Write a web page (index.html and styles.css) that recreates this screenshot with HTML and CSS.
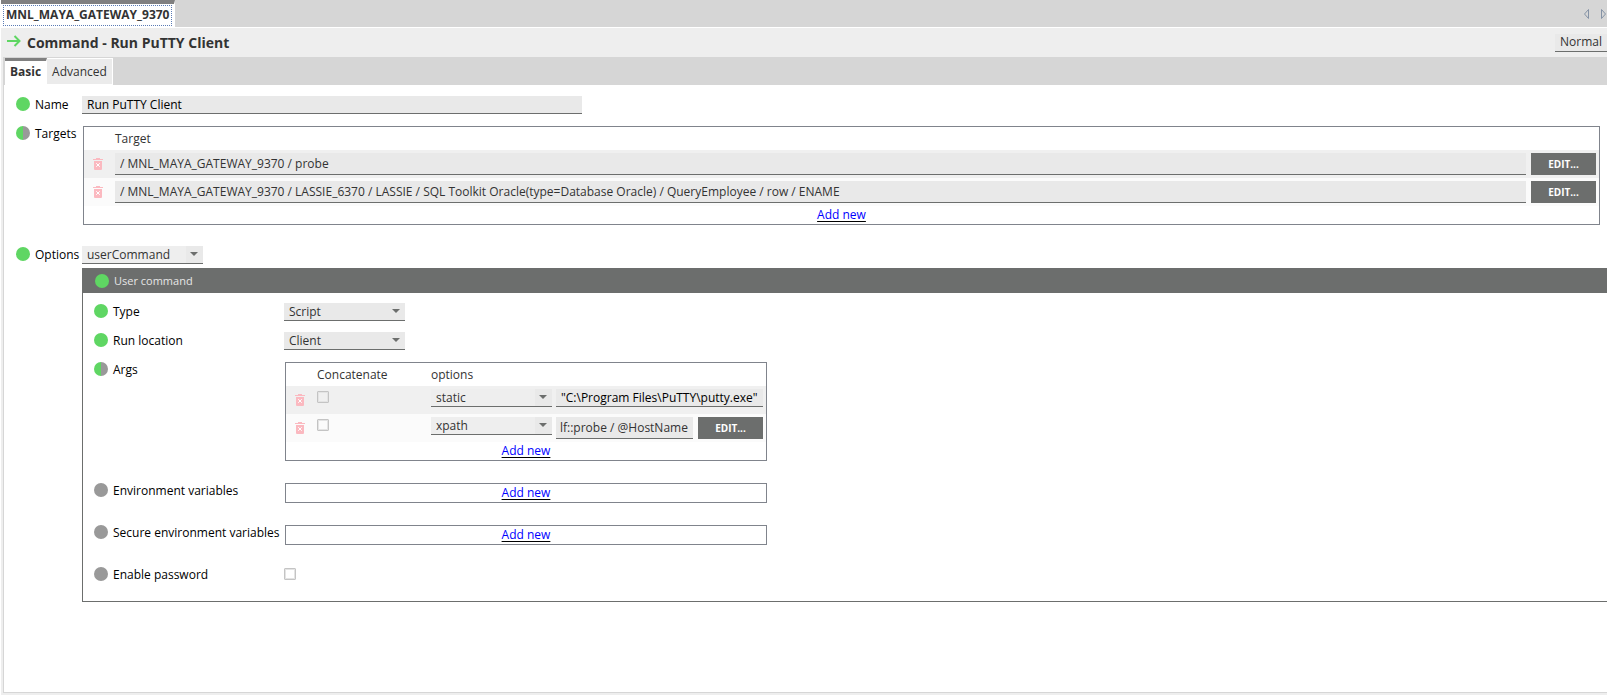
FILE: index.html
```html
<!DOCTYPE html>
<html lang="en">
  <head>
    <meta charset="UTF-8" />
    <meta name="viewport" content="width=device-width, initial-scale=1.0" />
    <title>Command - Run PuTTY Client</title>
    <link rel="stylesheet" href="styles.css" />
  </head>
  <body>
    <svg class="sprite">
      <symbol id="trash" viewBox="0 0 10 12">
        <path d="M0 1h3V0h4v1h3v1H0zM1 3h8v8a1 1 0 0 1-1 1H2a1 1 0 0 1-1-1z" />
        <path class="cross" d="M3.200 5.200l3.600 3.600M6.800 5.200L3.200 8.800" />
      </symbol>
    </svg>

    <nav class="windows">
      <button class="window-tab"><span>MNL_MAYA_GATEWAY_9370</span></button>
      <div class="arrows">
        <button aria-label="Previous">
          <svg width="6" height="10" viewBox="0 0 6 10"><path d="M4.500 .5v9L.5 5z" /></svg>
        </button>
        <button aria-label="Next">
          <svg width="6" height="10" viewBox="0 0 6 10"><path d="M.5 .5v9L4.500 5z" /></svg>
        </button>
      </div>
    </nav>

    <header class="title">
      <svg class="title-icon" width="14" height="12" viewBox="0 0 14 12">
        <path d="M0 6h13M7.500 1l5 5-5 5" />
      </svg>
      <h1>Command - Run PuTTY Client</h1>
      <button class="mode">Normal</button>
    </header>

    <main>
      <nav class="tabs">
        <button class="tab active">Basic</button>
        <button class="tab">Advanced</button>
      </nav>

      <form class="form">
        <div class="row">
          <label class="label" for="name"><i class="dot set"></i>Name</label>
          <input class="text name" id="name" type="text" value="Run PuTTY Client" />
        </div>

        <div class="row list">
          <span class="label"><i class="dot half"></i>Targets</span>
          <div class="box targets">
            <table>
              <thead>
                <tr>
                  <th class="del"></th>
                  <th>Target</th>
                  <th class="edit-col"></th>
                </tr>
              </thead>
              <tbody>
                <tr>
                  <td class="del">
                    <button class="remove" type="button" aria-label="Remove"><svg><use href="#trash" /></svg></button>
                  </td>
                  <td><input class="text path" type="text" aria-label="Target" value="/ MNL_MAYA_GATEWAY_9370 / probe" /></td>
                  <td class="edit-col"><button class="edit" type="button">EDIT...</button></td>
                </tr>
                <tr>
                  <td class="del">
                    <button class="remove" type="button" aria-label="Remove"><svg><use href="#trash" /></svg></button>
                  </td>
                  <td>
                    <input class="text path" type="text" aria-label="Target" value="/ MNL_MAYA_GATEWAY_9370 / LASSIE_6370 / LASSIE / SQL Toolkit Oracle(type=Database Oracle) / QueryEmployee / row / ENAME" />
                  </td>
                  <td class="edit-col"><button class="edit" type="button">EDIT...</button></td>
                </tr>
              </tbody>
            </table>
            <div class="add"><a href="#">Add new</a></div>
          </div>
        </div>

        <div class="row options">
          <label class="label" for="options"><i class="dot set"></i>Options</label>
          <div class="select pale">
            <select id="options"><option>userCommand</option></select>
          </div>
        </div>

        <section class="panel">
          <h2><i class="dot set"></i>User command</h2>
          <div class="panel-body">
            <div class="row">
              <label class="label" for="type"><i class="dot set"></i>Type</label>
              <div class="select">
                <select id="type"><option>Script</option></select>
              </div>
            </div>
            <div class="row">
              <label class="label" for="location"><i class="dot set"></i>Run location</label>
              <div class="select">
                <select id="location"><option>Client</option></select>
              </div>
            </div>
            <div class="row list">
              <span class="label"><i class="dot half"></i>Args</span>
              <div class="box">
                <table>
                  <thead>
                    <tr>
                      <th class="del"></th>
                      <th class="concat">Concatenate</th>
                      <th>options</th>
                    </tr>
                  </thead>
                  <tbody>
                    <tr>
                      <td class="del">
                        <button class="remove" type="button" aria-label="Remove"><svg><use href="#trash" /></svg></button>
                      </td>
                      <td class="concat"><input type="checkbox" aria-label="Concatenate" /></td>
                      <td>
                        <div class="arg">
                          <div class="select pale">
                            <select aria-label="Option"><option>static</option></select>
                          </div>
                          <input class="text" type="text" aria-label="Value" value="&quot;C:\Program Files\PuTTY\putty.exe&quot;" />
                        </div>
                      </td>
                    </tr>
                    <tr>
                      <td class="del">
                        <button class="remove" type="button" aria-label="Remove"><svg><use href="#trash" /></svg></button>
                      </td>
                      <td class="concat"><input type="checkbox" aria-label="Concatenate" /></td>
                      <td>
                        <div class="arg">
                          <div class="select pale">
                            <select aria-label="Option"><option>xpath</option></select>
                          </div>
                          <input class="text path" type="text" aria-label="Path" value="lf::probe / @HostName" />
                          <button class="edit" type="button">EDIT...</button>
                        </div>
                      </td>
                    </tr>
                  </tbody>
                </table>
                <div class="add"><a href="#">Add new</a></div>
              </div>
            </div>
            <div class="row list">
              <span class="label"><i class="dot"></i>Environment variables</span>
              <div class="box"><div class="add"><a href="#">Add new</a></div></div>
            </div>
            <div class="row list">
              <span class="label"><i class="dot"></i>Secure environment variables</span>
              <div class="box"><div class="add"><a href="#">Add new</a></div></div>
            </div>
            <div class="row">
              <label class="label" for="password"><i class="dot"></i>Enable password</label>
              <input class="password" id="password" type="checkbox" />
            </div>
          </div>
        </section>
      </form>
    </main>
  </body>
</html>
```

FILE: styles.css
```css
* {
  box-sizing: border-box;
}
body {
  display: flex;
  flex-direction: column;
  min-height: 100vh;
  margin: 0;
  padding: 0 0 1px 1px;
  background: #fff;
  color: #000;
  font: 12px/18px "Open Sans", sans-serif;
}
button,
input,
select {
  margin: 0;
  padding: 0;
  border: 0;
  border-radius: 0;
  background: none;
  color: inherit;
  font: inherit;
}
h1,
h2 {
  margin: 0;
}
svg {
  display: block;
}
.sprite {
  position: absolute;
  width: 0;
  height: 0;
}

/* window tabs */
.windows {
  display: flex;
  justify-content: space-between;
  height: 28px;
  border-bottom: 1px solid #fff;
  background: #d6d6d6;
}
.window-tab {
  padding: 0 2px 1px;
  border-top: 4px solid #808080;
  border-right: 1px solid #fff;
  background: #fff;
  color: #333;
  font-weight: bold;
}
.window-tab span {
  display: block;
  height: 21px;
  padding: 0 2px;
  border: 1px dotted #5a7bb5;
  line-height: 17px;
}
.arrows {
  display: flex;
  align-items: center;
  gap: 11px;
}
.arrows path {
  fill: none;
  stroke: #8593a6;
}

/* title */
.title {
  display: flex;
  align-items: center;
  height: 29px;
  padding-left: 6px;
  background: #eee;
}
.title-icon {
  margin-bottom: 3px;
  fill: none;
  stroke: #5fd663;
  stroke-width: 2;
}
.title h1 {
  flex: 1;
  padding-left: 6px;
  color: #333;
  font-size: 14px;
  line-height: 20px;
}
.mode {
  height: 18px;
  padding: 0 5px 2px;
  border-bottom: 1px solid #6c6e6d;
  background: #e9e9e9;
  color: #333;
  line-height: 15px;
}

main {
  flex: 1;
  padding-left: 1px;
  border-left: 2px solid #eee;
  border-bottom: 2px solid #eee;
  box-shadow: inset 1px -1px #d6d6d6;
}

/* tabs */
.tabs {
  display: flex;
  height: 28px;
  padding: 1px 0 0 1px;
  background: #d6d6d6;
}
.tab {
  padding: 0 5px;
  border: 1px solid #fff;
  border-left: 0;
  background: #ebebeb;
  color: #333;
}
.tab.active {
  padding-bottom: 2px;
  border-top: 3px solid #808080;
  background: #fff;
  font-weight: bold;
  line-height: 16px;
}

/* form */
.form {
  padding: 11px 0 0 12px;
}
.row {
  display: flex;
  align-items: flex-start;
  margin-bottom: 11px;
}
.row.list {
  margin-bottom: 21px;
}
.row.options {
  margin-bottom: 4px;
}
.label {
  display: flex;
  flex: none;
  gap: 5px;
  width: 66px;
  height: 18px;
  white-space: nowrap;
}
.dot {
  flex: none;
  width: 14px;
  height: 14px;
  margin-top: 1px;
  border-radius: 50%;
  background: #999;
}
.dot.set {
  background: #5fd663;
}
.dot.half {
  background: linear-gradient(to right, #5fd663 50%, #999 50%);
}

.text {
  width: 100%;
  height: 18px;
  padding: 0 5px;
  border-bottom: 1px solid #6c6e6d;
  background: #e9e9e9;
}
.text.name {
  width: 500px;
}
.text.path {
  display: block;
  height: 22px;
  color: #333;
}

.select {
  position: relative;
  flex: none;
  width: 121px;
  height: 18px;
  border-bottom: 1px solid #6c6e6d;
  background: #e9e9e9;
  color: #333;
}
.select.pale {
  background: linear-gradient(to left, #e9e9e9 17px, #eee 17px);
}
.select select {
  display: block;
  width: 100%;
  height: 17px;
  padding-left: 5px;
  appearance: none;
}
.select::after {
  content: "";
  position: absolute;
  top: 6px;
  right: 5px;
  border: 4px solid transparent;
  border-top-color: #6c6e6d;
  border-bottom: 0;
  pointer-events: none;
}

input[type="checkbox"] {
  display: block;
  width: 12px;
  height: 12px;
  border: 1px solid #c4c4c4;
  border-radius: 1px;
  box-shadow: inset 0 0 0 1px #e4e4e4;
  appearance: none;
}
.password {
  margin-top: 2px;
}

/* lists */
.box {
  width: 482px;
  margin: 1px 0 0 1px;
  border: 1px solid #80848c;
}
.box.targets {
  flex: 1;
  margin-right: 7px;
}
table {
  width: 100%;
  border-collapse: collapse;
  table-layout: fixed;
  color: #333;
}
th {
  height: 23px;
  padding: 0;
  font-weight: normal;
  text-align: left;
}
td {
  height: 28px;
  padding: 3px 0;
  vertical-align: top;
}
tbody tr:nth-child(odd) {
  background: #f0f0f0;
}
tbody tr:nth-child(even) {
  background: #fbfbfb;
}
.del {
  width: 31px;
}
td.del {
  padding: 8px 9px;
}
.concat {
  width: 114px;
}
td.concat {
  padding-top: 5px;
}
.edit-col {
  width: 73px;
}
td.edit-col {
  padding-left: 5px;
}
.remove {
  display: block;
}
.remove svg {
  width: 10px;
  height: 12px;
  fill: #fbb9c0;
}
.cross {
  fill: none;
  stroke: #fff;
}
.edit {
  display: block;
  flex: none;
  width: 65px;
  height: 22px;
  background: #6c6e6d;
  color: #fff;
  font-size: 10px;
  font-weight: bold;
}
.arg {
  display: flex;
  align-items: flex-start;
  padding-right: 3px;
}
.arg .text {
  flex: 1;
  min-width: 0;
  margin-left: 4px;
  color: #000;
}
.arg .text.path {
  padding-left: 4px;
  color: #333;
}
.arg .edit {
  margin-left: 5px;
}
.add {
  height: 18px;
  text-align: center;
}
.add a {
  color: #00f;
  text-decoration: underline 1px #000;
  text-decoration-skip-ink: none;
  text-underline-offset: 2px;
}

/* user command */
.panel {
  margin-left: 66px;
  border-left: 1px solid #6c6e6d;
  border-bottom: 1px solid #6c6e6d;
}
.panel h2 {
  display: flex;
  align-items: center;
  gap: 5px;
  height: 25px;
  padding-left: 12px;
  background: #6c6e6d;
  color: #e6e6e6;
  font-size: 11px;
  font-weight: normal;
}
.panel h2 .dot {
  margin-top: 0;
}
.panel-body {
  padding: 10px 0 6px 11px;
}
.panel-body .label {
  width: 190px;
}
```
